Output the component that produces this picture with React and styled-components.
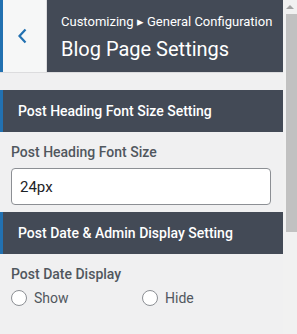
import React from "react";
import styled, { createGlobalStyle } from "styled-components";

const Global = createGlobalStyle`
  html, body {
    margin: 0;
    padding: 0;
    background: #f0f0f1;
    font-family: Roboto, "Liberation Sans", sans-serif;
  }
`;

const Page = styled.div`
  display: flex;
  width: 297px;
  height: 334px;
  overflow: hidden;
`;

const Panel = styled.div`
  width: 283px;
  background: #f0f0f1;
`;

const Header = styled.div`
  display: flex;
  height: 72px;
  border-bottom: 1px solid #dcdcde;
`;

const BackButton = styled.button`
  width: 47px;
  border: none;
  border-left: 3px solid #2271b1;
  border-right: 1px solid #dcdcde;
  background: #f6f7f7;
  display: flex;
  align-items: center;
  justify-content: center;
  padding: 0 6px 0 0;
`;

const HeaderInfo = styled.div`
  flex: 1;
  background: #434a56;
  color: #fff;
  padding: 13px 0 0 14px;
`;

const Crumb = styled.div`
  font-size: 13px;
  line-height: 18px;
`;

const Title = styled.div`
  font-size: 20px;
  line-height: 28px;
  margin-top: 4px;
`;

const Section = styled.div`
  margin-top: ${(p) => p.$top}px;
  height: 42px;
  background: #434a56;
  border-left: 3px solid #2271b1;
  color: #fff;
  font-size: 14px;
  font-weight: 500;
  display: flex;
  align-items: center;
  padding-left: 15px;
`;

const Control = styled.div`
  padding: 10px 12px 7px 11px;
`;

const Label = styled.div`
  font-size: 14px;
  font-weight: 500;
  color: #50575e;
  line-height: 20px;
  margin-bottom: 6px;
`;

const Input = styled.input`
  box-sizing: border-box;
  width: 260px;
  height: 37px;
  border: 1px solid #8c8f94;
  border-radius: 4px;
  background: #fff;
  font-family: Roboto, "Liberation Sans", sans-serif;
  font-size: 15px;
  color: #1d2327;
  padding: 0 8px;
  outline: none;
`;

const Radios = styled.div`
  display: grid;
  grid-template-columns: 131px 1fr;
  margin-top: 6px;
`;

const RadioLabel = styled.label`
  display: flex;
  align-items: center;
  gap: 7px;
  font-size: 14px;
  color: #50575e;
`;

const Circle = styled.span`
  box-sizing: border-box;
  width: 16px;
  height: 16px;
  border-radius: 50%;
  border: 1px solid #8c8f94;
  background: #fff;
`;

const Scrollbar = styled.div`
  width: 14px;
  background: #f1f1f1;
  display: flex;
  flex-direction: column;
  align-items: center;
`;

const Arrow = styled.div`
  margin-top: 5px;
  width: 0;
  height: 0;
  border-left: 4px solid transparent;
  border-right: 4px solid transparent;
  border-bottom: 4px solid #a3a3a3;
`;

const Thumb = styled.div`
  margin-top: 5px;
  margin-left: 2px;
  width: 11px;
  height: 218px;
  background: #c1c1c1;
`;

export default function App() {
  return (
    <Page>
      <Global />
      <Panel>
        <Header>
          <BackButton>
            <svg width="10" height="16" viewBox="0 0 10 16">
              <path d="M8.5 1.5 L2.5 8 L8.5 14.5" fill="none" stroke="#2271b1" strokeWidth="2.2" />
            </svg>
          </BackButton>
          <HeaderInfo>
            <Crumb>Customizing ▸ General Configuration</Crumb>
            <Title>Blog Page Settings</Title>
          </HeaderInfo>
        </Header>
        <Section $top={17}>Post Heading Font Size Setting</Section>
        <Control>
          <Label>Post Heading Font Size</Label>
          <Input defaultValue="24px" />
        </Control>
        <Section $top={0}>Post Date &amp; Admin Display Setting</Section>
        <Control>
          <Label>Post Date Display</Label>
          <Radios>
            <RadioLabel>
              <Circle />
              Show
            </RadioLabel>
            <RadioLabel>
              <Circle />
              Hide
            </RadioLabel>
          </Radios>
        </Control>
      </Panel>
      <Scrollbar>
        <Arrow />
        <Thumb />
      </Scrollbar>
    </Page>
  );
}
